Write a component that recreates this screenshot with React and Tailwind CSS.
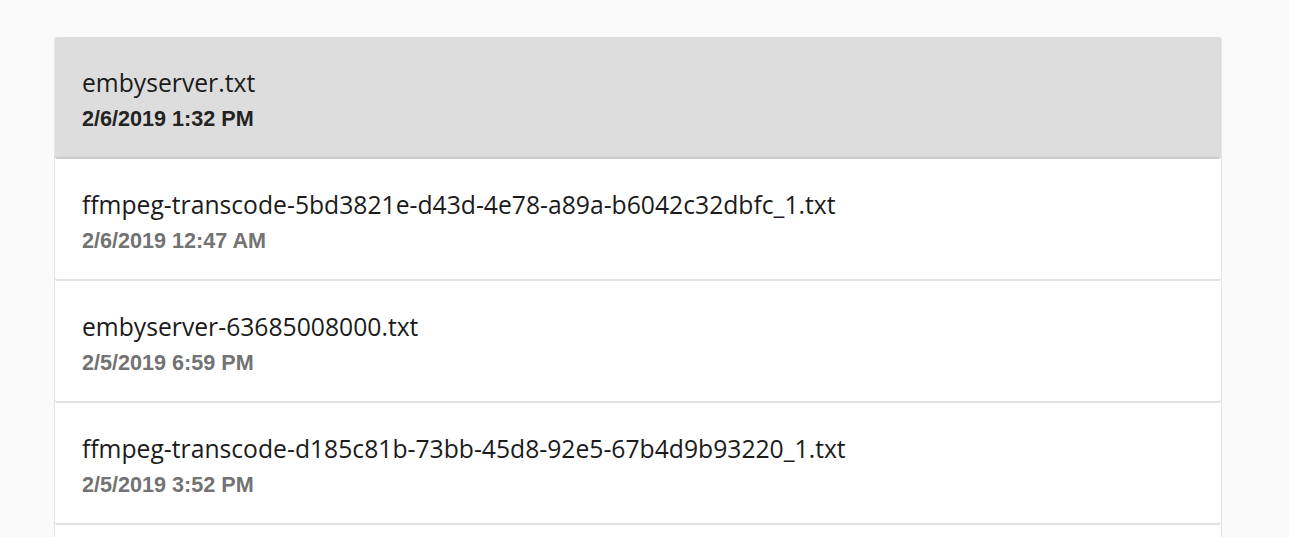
import React from "react";

const logs = [
  { name: "embyserver.txt", date: "2/6/2019 1:32 PM", active: true },
  { name: "ffmpeg-transcode-5bd3821e-d43d-4e78-a89a-b6042c32dbfc_1.txt", date: "2/6/2019 12:47 AM" },
  { name: "embyserver-63685008000.txt", date: "2/5/2019 6:59 PM" },
  { name: "ffmpeg-transcode-d185c81b-73bb-45d8-92e5-67b4d9b93220_1.txt", date: "2/5/2019 3:52 PM" },
];

const LogItem = ({ name, date, active }) => (
  <div
    className={`h-[122px] pt-[30px] pl-[27px] rounded-[3px] border-b-2 ${
      active ? "bg-[#dddddd] border-[#cbcbcb]" : "bg-white border-[#e1e1e1]"
    }`}
  >
    <div className="text-[24.7px] leading-[32px] text-[#1b1b1b] font-['Open_Sans',sans-serif]">
      {name}
    </div>
    <div
      className={`mt-[6px] text-[21.6px] leading-[28px] font-bold font-['Liberation_Sans',Arial,sans-serif] ${
        active ? "text-[#232323]" : "text-[#737373]"
      }`}
    >
      {date}
    </div>
  </div>
);

export default function App() {
  return (
    <div className="h-[537px] overflow-hidden bg-[#fafafa] pt-[37px] pl-[54px]">
      <div className="w-[1168px] h-full border-x border-[#e4e4e4] bg-white rounded-t-[3px]">
        {logs.map((log) => (
          <LogItem key={log.name} {...log} />
        ))}
      </div>
    </div>
  );
}
